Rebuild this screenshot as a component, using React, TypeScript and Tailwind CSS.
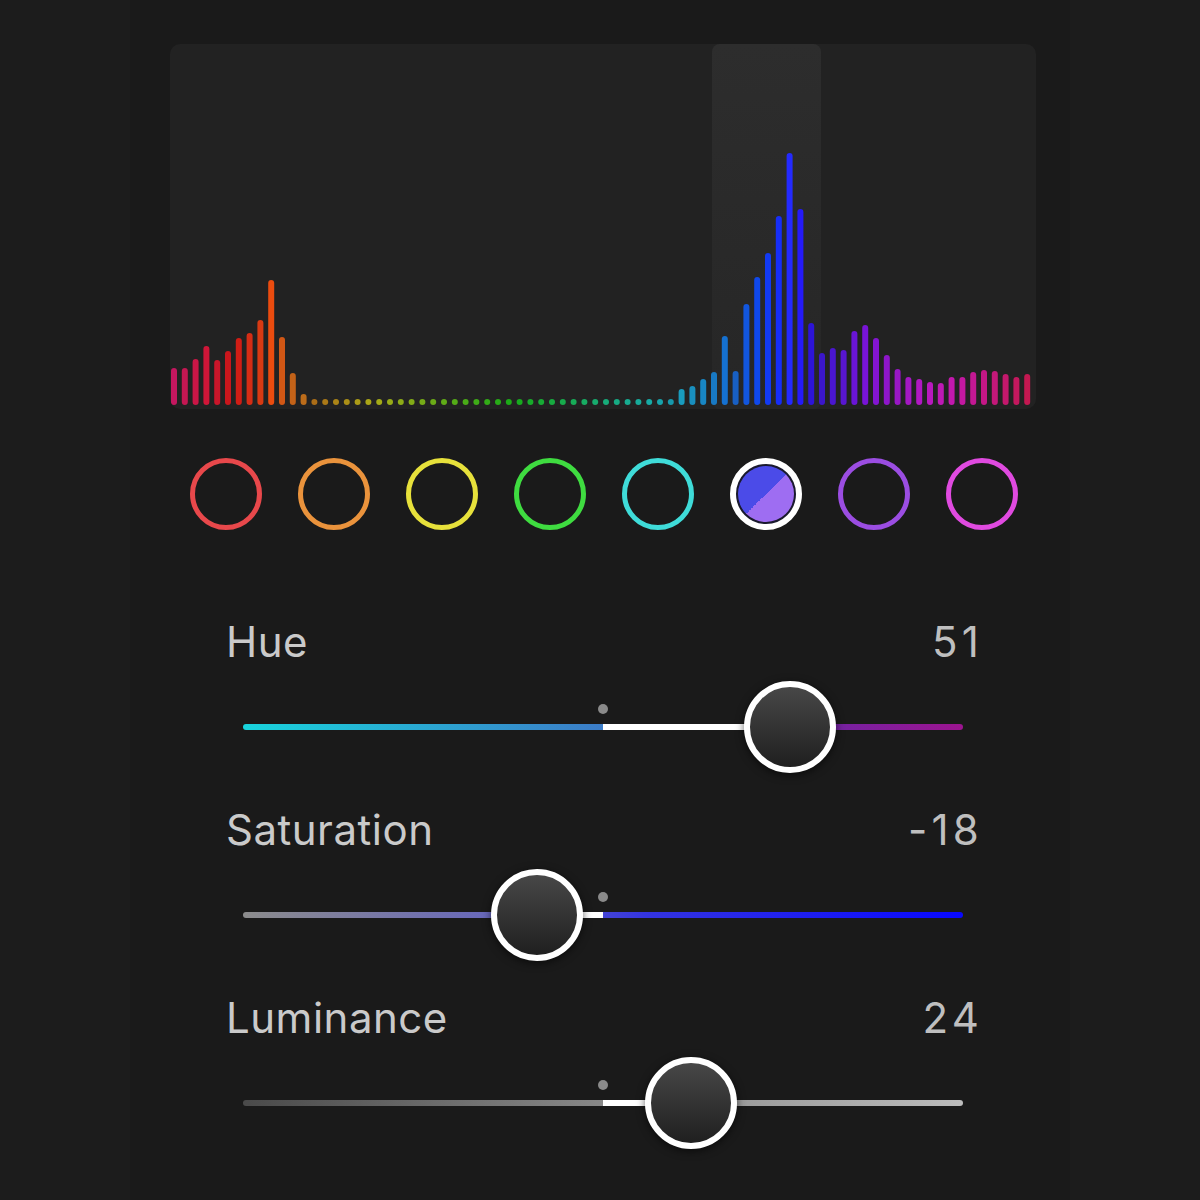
import React from "react"

const heights = [
  37, 37, 46, 59, 45, 54, 67, 72, 85, 125, 68, 32, 11,
  ...Array.from({ length: 34 }, () => 6),
  16, 19, 26, 33, 69, 34, 101, 128, 152, 189, 252, 196, 82, 52, 57, 55, 74,
  80, 67, 50, 36, 28, 26, 23, 22, 28, 28, 33, 35, 34, 31, 28, 31,
]

function barColor(i: number, h: number) {
  const hue = (335 + i * 4.62) % 360
  const t = Math.min(h, 250) / 250
  const sat = 75 + t * 25
  const light = 38 + t * 16 + (h > 6 ? 3 : 0)
  return `hsl(${hue.toFixed(1)}, ${sat.toFixed(0)}%, ${light.toFixed(0)}%)`
}

function Histogram() {
  const base = 361
  return (
    <div className="w-[866px] h-[365px] rounded-[10px] bg-[#222222] overflow-hidden">
      <svg width="866" height="365" viewBox="0 0 866 365">
        <defs>
          <linearGradient id="hl" x1="0" y1="0" x2="0" y2="1">
            <stop offset="0%" stopColor="#2d2d2d" />
            <stop offset="100%" stopColor="#262626" />
          </linearGradient>
        </defs>
        <rect x="542" y="0" width="109" height="365" rx="8" fill="url(#hl)" />
        {heights.map((h, i) => {
          const cx = 4 + i * 10.8
          return (
            <rect
              key={i}
              x={cx - 3}
              y={base - h}
              width="6"
              height={h}
              rx="3"
              fill={barColor(i, h)}
            />
          )
        })}
      </svg>
    </div>
  )
}

const rings = [
  "border-[#e8484b]",
  "border-[#ea933c]",
  "border-[#e7e13b]",
  "border-[#3fdc40]",
  "border-[#3fdcd9]",
  "selected",
  "border-[#9b4de2]",
  "border-[#e04ae0]",
]

function ColorRow() {
  return (
    <div className="flex gap-[36px] mt-[49px] ml-[20px]">
      {rings.map((c, i) =>
        c === "selected" ? (
          <div
            key={i}
            className="w-[72px] h-[72px] rounded-full border-[6px] border-white bg-[#1a1a2e] p-[2px]"
          >
            <div className="w-full h-full rounded-full bg-[linear-gradient(135deg,#4b4be8_50%,#9e6df2_50%)]" />
          </div>
        ) : (
          <div key={i} className={`w-[72px] h-[72px] rounded-full border-[5px] ${c}`} />
        )
      )}
    </div>
  )
}

type SliderProps = {
  label: string
  value: number
  track: string
}

function Slider({ label, value, track }: SliderProps) {
  const center = 377
  const pos = center + (value / 100) * 366
  const fillLeft = Math.min(center, pos)
  const fillWidth = Math.abs(pos - center)
  return (
    <div className="w-[754px] mb-[34px]">
      <div className="flex justify-between items-center h-[50px] text-[42px] leading-[50px]">
        <span className="text-[#cacaca] tracking-[0.012em]">{label}</span>
        <span className="text-[#bfbfbf] tracking-[0.1em] -mr-[3px]">{value}</span>
      </div>
      <div className="relative h-[88px] mt-[16px]">
        <div className={`absolute left-[17px] top-[41px] w-[720px] h-[6px] rounded-full ${track}`} />
        <div
          className="absolute top-[41px] h-[6px] bg-white"
          style={{ left: fillLeft, width: fillWidth }}
        />
        <div className="absolute left-[372px] top-[21px] w-[10px] h-[10px] rounded-full bg-[#8a8a8a]" />
        <div
          className="absolute top-0 w-[92px] h-[92px] -mt-[2px] rounded-full border-[6px] border-white bg-[linear-gradient(180deg,#474747,#1f1f1f)] shadow-[0_2px_8px_rgba(0,0,0,0.6)]"
          style={{ left: pos - 46 }}
        />
      </div>
    </div>
  )
}

export default function App() {
  return (
    <div
      className="min-h-[1200px] bg-[#1c1c1c] flex justify-center overflow-hidden"
      style={{ fontFamily: "Inter, 'Noto Sans', sans-serif" }}
    >
      <div className="w-[940px] min-h-[1200px] bg-[#1a1a1a] pt-[44px] pl-[40px] flex flex-col">
        <Histogram />
        <ColorRow />
        <div className="ml-[56px] mt-[87px] flex flex-col">
          <Slider
            label="Hue"
            value={51}
            track="bg-[linear-gradient(90deg,#18d4dc_0%,#3c7cc8_50%,#4a4cb4_68%,#7a20a0_84%,#9c1490_100%)]"
          />
          <Slider
            label="Saturation"
            value={-18}
            track="bg-[linear-gradient(90deg,#8c8c8c_0%,#6464c0_38%,#3434e0_56%,#0808ff_100%)]"
          />
          <Slider
            label="Luminance"
            value={24}
            track="bg-[linear-gradient(90deg,#4a4a4a_0%,#888888_50%,#bcbcbc_100%)]"
          />
        </div>
      </div>
    </div>
  )
}
